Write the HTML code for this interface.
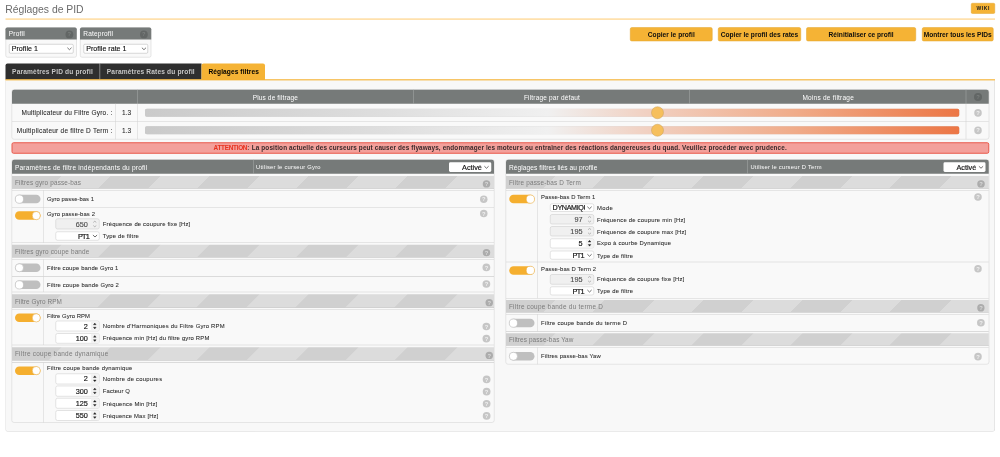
<!DOCTYPE html>
<html lang="fr"><head><meta charset="utf-8"><title>Réglages de PID</title>
<style>
html,body{margin:0;padding:0;}
body{width:1000px;height:457px;background:#fff;position:relative;overflow:hidden;font-family:"Liberation Sans", sans-serif;-webkit-font-smoothing:antialiased;}
#s{position:absolute;left:0;top:0;width:4000px;height:1828px;transform:scale(0.25);transform-origin:0 0;}
#g,#x{position:absolute;left:0;top:0;width:100%;height:100%;}
#x{will-change:opacity;}
#g>div,#x>div{position:absolute;box-sizing:border-box;}
.t,.u{white-space:nowrap;}
#g>svg{position:absolute;overflow:visible;}
</style></head>
<body>
<div id="s">
<div id="g">
<div style="left:22px;top:72.8px;width:3958px;height:6.8px;background:#ffe1ad;"></div>
<div style="left:3884px;top:12px;width:96px;height:43.2px;background:#f5b335;border-radius:6px;border:2px solid #e3a42c;"></div>
<div style="left:22px;top:109.2px;width:284.8px;height:121.2px;background:#f9f9f9;border:2.4px solid #cfcfcf;border-radius:8px;"></div>
<div style="left:22px;top:110.4px;width:284.8px;height:48px;background:#767a79;border-radius:7.2px 7.2px 0 0;"></div>
<div style="left:261.6px;top:122px;width:31.2px;height:31.2px;background:#626665;border-radius:50%;"></div>
<div style="left:36.4px;top:175.6px;width:257.6px;height:38px;background:#fff;border:2px solid #b0b0b0;border-radius:5.6px;"></div>
<svg style="left:269.16px;top:190.16px;width:17.68px;height:10.88px" viewBox="0 0 5.2 3.2"><path d="M0.5 0.6 L2.6 2.6 L4.7 0.6" fill="none" stroke="#333" stroke-width="0.8" stroke-linecap="round" stroke-linejoin="round"/></svg>
<div style="left:320px;top:109.2px;width:284.8px;height:121.2px;background:#f9f9f9;border:2.4px solid #cfcfcf;border-radius:8px;"></div>
<div style="left:320px;top:110.4px;width:284.8px;height:48px;background:#767a79;border-radius:7.2px 7.2px 0 0;"></div>
<div style="left:559.6px;top:122px;width:31.2px;height:31.2px;background:#626665;border-radius:50%;"></div>
<div style="left:334.4px;top:175.6px;width:257.6px;height:38px;background:#fff;border:2px solid #b0b0b0;border-radius:5.6px;"></div>
<svg style="left:567.16px;top:190.16px;width:17.68px;height:10.88px" viewBox="0 0 5.2 3.2"><path d="M0.5 0.6 L2.6 2.6 L4.7 0.6" fill="none" stroke="#333" stroke-width="0.8" stroke-linecap="round" stroke-linejoin="round"/></svg>
<div style="left:2520px;top:108.8px;width:330.4px;height:56px;background:#f5b335;border:2px solid #e3a42c;border-radius:7.2px;"></div>
<div style="left:2872px;top:108.8px;width:332px;height:56px;background:#f5b335;border:2px solid #e3a42c;border-radius:7.2px;"></div>
<div style="left:3224.8px;top:108.8px;width:439.2px;height:56px;background:#f5b335;border:2px solid #e3a42c;border-radius:7.2px;"></div>
<div style="left:3688px;top:108.8px;width:285.6px;height:56px;background:#f5b335;border:2px solid #e3a42c;border-radius:7.2px;"></div>
<div style="left:22px;top:253.6px;width:376.8px;height:64px;background:#2f2f2f;border-radius:8px 0 0 0;"></div>
<div style="left:400.4px;top:253.6px;width:405.2px;height:64px;background:#2f2f2f;"></div>
<div style="left:398.8px;top:253.6px;width:2px;height:64px;background:#8a8a8a;"></div>
<div style="left:805.6px;top:253.6px;width:254.4px;height:66.4px;background:#f5b335;border-radius:8px 8px 0 0;"></div>
<div style="left:22px;top:316.8px;width:3958px;height:6.4px;background:#f5b335;"></div>
<div style="left:20.8px;top:322.4px;width:3959.2px;height:1404.4px;background:#f8f8f8;border:2.4px solid #d2d2d2;border-top:none;border-radius:0 0 12px 12px;"></div>
<div style="left:46.4px;top:357.2px;width:3910.4px;height:201.2px;background:#f9f9f9;border:2.2px solid #d0d0d0;border-radius:10.4px;"></div>
<div style="left:48.4px;top:359.2px;width:3906.4px;height:56px;background:#767a79;border-radius:8.8px 8.8px 0 0;"></div>
<div style="left:549px;top:359.2px;width:2px;height:56px;background:#a9adac;"></div>
<div style="left:1653.8px;top:359.2px;width:2px;height:56px;background:#a9adac;"></div>
<div style="left:2757px;top:359.2px;width:2px;height:56px;background:#a9adac;"></div>
<div style="left:3863px;top:359.2px;width:2px;height:56px;background:#a9adac;"></div>
<div style="left:460.2px;top:415.2px;width:2px;height:141.6px;background:#d0d0d0;"></div>
<div style="left:549px;top:415.2px;width:2px;height:141.6px;background:#d0d0d0;"></div>
<div style="left:3863px;top:415.2px;width:2px;height:141.6px;background:#d0d0d0;"></div>
<div style="left:48.4px;top:484.8px;width:3906.4px;height:2px;background:#d0d0d0;"></div>
<div style="left:3896.4px;top:372.4px;width:31.2px;height:31.2px;background:#626665;border-radius:50%;"></div>
<div style="left:580px;top:435.2px;width:3256.8px;height:31.6px;background:linear-gradient(90deg,#cacaca 0%,#dedede 29%,#f0f0f0 49.5%,#f1d2c4 61%,#f0ab89 80%,#ec7645 100%);border-radius:7.2px;box-shadow:inset 0 0 2.4px rgba(0,0,0,.18);"></div>
<div style="left:2605.2px;top:426px;width:49.6px;height:49.6px;background:#f6bf5c;border:2.8px solid #c9a05a;border-radius:50%;"></div>
<div style="left:3896.8px;top:436.4px;width:30.4px;height:30.4px;background:#c6c6c6;border-radius:50%;"></div>
<div style="left:580px;top:505.2px;width:3256.8px;height:31.6px;background:linear-gradient(90deg,#cacaca 0%,#dedede 29%,#f0f0f0 49.5%,#f1d2c4 61%,#f0ab89 80%,#ec7645 100%);border-radius:7.2px;box-shadow:inset 0 0 2.4px rgba(0,0,0,.18);"></div>
<div style="left:2605.2px;top:496px;width:49.6px;height:49.6px;background:#f6bf5c;border:2.8px solid #c9a05a;border-radius:50%;"></div>
<div style="left:3896.8px;top:506.4px;width:30.4px;height:30.4px;background:#c6c6c6;border-radius:50%;"></div>
<div style="left:46.4px;top:568.8px;width:3910.4px;height:46.4px;background:#f3a09b;border:4px solid #e9594b;border-radius:8px;"></div>
<div style="left:46.4px;top:637.2px;width:1932px;height:1053.6px;background:#f9f9f9;border:2.2px solid #d0d0d0;border-radius:10.4px;"></div>
<div style="left:48.4px;top:639.2px;width:1928px;height:55.6px;background:#767a79;border-radius:8.8px 8.8px 0 0;"></div>
<div style="left:1011.8px;top:639.2px;width:2px;height:55.6px;background:#a9adac;"></div>
<div style="left:1796px;top:649.2px;width:168.8px;height:38.8px;background:#fff;border-radius:5.6px;"></div>
<svg style="left:1936.96px;top:664.04px;width:18.08px;height:11.12px" viewBox="0 0 5.2 3.2"><path d="M0.5 0.6 L2.6 2.6 L4.7 0.6" fill="none" stroke="#2a2a2a" stroke-width="0.8" stroke-linecap="round" stroke-linejoin="round"/></svg>
<div style="left:48.4px;top:704.4px;width:1928px;height:50.4px;background-color:#dcdcdc;background-image:linear-gradient(135deg,rgba(0,0,0,.055) 25%,transparent 25%,transparent 50%,rgba(0,0,0,.055) 50%,rgba(0,0,0,.055) 75%,transparent 75%,transparent);background-size:396px 396px;border-bottom:2px solid #c6c6c6;"></div>
<div style="left:1931.2px;top:720.8px;width:29.6px;height:29.6px;background:#acacac;border-radius:50%;"></div>
<div style="left:48.4px;top:759.68px;width:1928px;height:2.24px;background:#d0d0d0;"></div>
<div style="left:60.4px;top:779.2px;width:101.6px;height:34px;background:#bfbfbf;border-radius:17px;"></div>
<div style="left:60px;top:778.8px;width:34.8px;height:34.8px;background:#fff;border-radius:50%;border:2px solid #b0b0b0;"></div>
<div style="left:1920px;top:781.6px;width:30.4px;height:30.4px;background:#c6c6c6;border-radius:50%;"></div>
<div style="left:48.4px;top:828.08px;width:1928px;height:2.24px;background:#d0d0d0;"></div>
<div style="left:60.4px;top:845.2px;width:101.6px;height:34px;background:#f5af2f;border-radius:17px;"></div>
<div style="left:127.6px;top:844.8px;width:34.8px;height:34.8px;background:#fff;border-radius:50%;border:2px solid #e5a535;"></div>
<div style="left:1920px;top:838.8px;width:30.4px;height:30.4px;background:#c6c6c6;border-radius:50%;"></div>
<div style="left:221.6px;top:874.4px;width:176.4px;height:42.8px;background:#f0f0f0;border:2.2px solid #c8c8c8;border-radius:8px;"></div>
<svg style="left:372.4px;top:879.8px;width:14.4px;height:32px" viewBox="0 0 3.6 8"><path d="M0.6 2.2 L1.8 1.2 L3.0 2.2 M0.6 5.8 L1.8 6.8 L3.0 5.8" fill="none" stroke="#9a9a9a" stroke-width="0.7" stroke-linejoin="round" stroke-linecap="round"/></svg>
<div style="left:221.6px;top:925.6px;width:176.4px;height:36.4px;background:#fff;border:2.2px solid #c8c8c8;border-radius:8px;"></div>
<svg style="left:370.56px;top:939.44px;width:18.08px;height:11.12px" viewBox="0 0 5.2 3.2"><path d="M0.5 0.6 L2.6 2.6 L4.7 0.6" fill="none" stroke="#2a2a2a" stroke-width="0.8" stroke-linecap="round" stroke-linejoin="round"/></svg>
<div style="left:172.88px;top:760.8px;width:2.24px;height:210.4px;background:#d0d0d0;"></div>
<div style="left:48.4px;top:970.08px;width:1928px;height:2.24px;background:#d0d0d0;"></div>
<div style="left:48.4px;top:979.2px;width:1928px;height:50.4px;background-color:#dcdcdc;background-image:linear-gradient(135deg,rgba(0,0,0,.055) 25%,transparent 25%,transparent 50%,rgba(0,0,0,.055) 50%,rgba(0,0,0,.055) 75%,transparent 75%,transparent);background-size:396px 396px;border-bottom:2px solid #c6c6c6;"></div>
<div style="left:1931.2px;top:995.6px;width:29.6px;height:29.6px;background:#acacac;border-radius:50%;"></div>
<div style="left:48.4px;top:1036.08px;width:1928px;height:2.24px;background:#d0d0d0;"></div>
<div style="left:60.4px;top:1054px;width:101.6px;height:34px;background:#bfbfbf;border-radius:17px;"></div>
<div style="left:60px;top:1053.6px;width:34.8px;height:34.8px;background:#fff;border-radius:50%;border:2px solid #b0b0b0;"></div>
<div style="left:1930.4px;top:1054.4px;width:30.4px;height:30.4px;background:#c6c6c6;border-radius:50%;"></div>
<div style="left:48.4px;top:1104.48px;width:1928px;height:2.24px;background:#d0d0d0;"></div>
<div style="left:60.4px;top:1122.4px;width:101.6px;height:34px;background:#bfbfbf;border-radius:17px;"></div>
<div style="left:60px;top:1122px;width:34.8px;height:34.8px;background:#fff;border-radius:50%;border:2px solid #b0b0b0;"></div>
<div style="left:1930.4px;top:1120.8px;width:30.4px;height:30.4px;background:#c6c6c6;border-radius:50%;"></div>
<div style="left:172.88px;top:1037.2px;width:2.24px;height:130.8px;background:#d0d0d0;"></div>
<div style="left:48.4px;top:1166.88px;width:1928px;height:2.24px;background:#d0d0d0;"></div>
<div style="left:48.4px;top:1177.2px;width:1928px;height:54.4px;background-color:#dcdcdc;background-image:linear-gradient(135deg,rgba(0,0,0,.055) 25%,transparent 25%,transparent 50%,rgba(0,0,0,.055) 50%,rgba(0,0,0,.055) 75%,transparent 75%,transparent);background-size:396px 396px;border-bottom:2px solid #c6c6c6;"></div>
<div style="left:1942.4px;top:1195.6px;width:29.6px;height:29.6px;background:#acacac;border-radius:50%;"></div>
<div style="left:48.4px;top:1236.88px;width:1928px;height:2.24px;background:#d0d0d0;"></div>
<div style="left:60.4px;top:1254.4px;width:101.6px;height:34px;background:#f5af2f;border-radius:17px;"></div>
<div style="left:127.6px;top:1254px;width:34.8px;height:34.8px;background:#fff;border-radius:50%;border:2px solid #e5a535;"></div>
<div style="left:221.6px;top:1283.2px;width:176.4px;height:41.6px;background:#fff;border:2.2px solid #c8c8c8;border-radius:8px;"></div>
<div style="left:364.4px;top:1285.6px;width:31.2px;height:36.8px;background:#f3f3f3;border-radius:0 6px 6px 0;"></div>
<svg style="left:372.4px;top:1288px;width:14.4px;height:32px" viewBox="0 0 3.6 8"><path d="M0.45 2.75 L1.8 1.1 L3.15 2.75 Z M0.45 5.25 L1.8 6.9 L3.15 5.25 Z" fill="#1e1e1e" stroke="#1e1e1e" stroke-width="0.35" stroke-linejoin="round"/></svg>
<div style="left:1930.4px;top:1290.8px;width:30.4px;height:30.4px;background:#c6c6c6;border-radius:50%;"></div>
<div style="left:221.6px;top:1332.8px;width:176.4px;height:41.6px;background:#fff;border:2.2px solid #c8c8c8;border-radius:8px;"></div>
<div style="left:364.4px;top:1335.2px;width:31.2px;height:36.8px;background:#f3f3f3;border-radius:0 6px 6px 0;"></div>
<svg style="left:372.4px;top:1337.6px;width:14.4px;height:32px" viewBox="0 0 3.6 8"><path d="M0.45 2.75 L1.8 1.1 L3.15 2.75 Z M0.45 5.25 L1.8 6.9 L3.15 5.25 Z" fill="#1e1e1e" stroke="#1e1e1e" stroke-width="0.35" stroke-linejoin="round"/></svg>
<div style="left:1930.4px;top:1339.2px;width:30.4px;height:30.4px;background:#c6c6c6;border-radius:50%;"></div>
<div style="left:172.88px;top:1238px;width:2.24px;height:142px;background:#d0d0d0;"></div>
<div style="left:48.4px;top:1378.88px;width:1928px;height:2.24px;background:#d0d0d0;"></div>
<div style="left:48.4px;top:1388.8px;width:1928px;height:53.6px;background-color:#dcdcdc;background-image:linear-gradient(135deg,rgba(0,0,0,.055) 25%,transparent 25%,transparent 50%,rgba(0,0,0,.055) 50%,rgba(0,0,0,.055) 75%,transparent 75%,transparent);background-size:396px 396px;border-bottom:2px solid #c6c6c6;"></div>
<div style="left:1942.4px;top:1406.8px;width:29.6px;height:29.6px;background:#acacac;border-radius:50%;"></div>
<div style="left:48.4px;top:1448.48px;width:1928px;height:2.24px;background:#d0d0d0;"></div>
<div style="left:60.4px;top:1465.6px;width:101.6px;height:34px;background:#f5af2f;border-radius:17px;"></div>
<div style="left:127.6px;top:1465.2px;width:34.8px;height:34.8px;background:#fff;border-radius:50%;border:2px solid #e5a535;"></div>
<div style="left:221.6px;top:1494px;width:176.4px;height:42.8px;background:#fff;border:2.2px solid #c8c8c8;border-radius:8px;"></div>
<div style="left:364.4px;top:1496.4px;width:31.2px;height:38px;background:#f3f3f3;border-radius:0 6px 6px 0;"></div>
<svg style="left:372.4px;top:1499.4px;width:14.4px;height:32px" viewBox="0 0 3.6 8"><path d="M0.45 2.75 L1.8 1.1 L3.15 2.75 Z M0.45 5.25 L1.8 6.9 L3.15 5.25 Z" fill="#1e1e1e" stroke="#1e1e1e" stroke-width="0.35" stroke-linejoin="round"/></svg>
<div style="left:1931.2px;top:1502.4px;width:30.4px;height:30.4px;background:#c6c6c6;border-radius:50%;"></div>
<div style="left:221.6px;top:1542.8px;width:176.4px;height:42.8px;background:#fff;border:2.2px solid #c8c8c8;border-radius:8px;"></div>
<div style="left:364.4px;top:1545.2px;width:31.2px;height:38px;background:#f3f3f3;border-radius:0 6px 6px 0;"></div>
<svg style="left:372.4px;top:1548.2px;width:14.4px;height:32px" viewBox="0 0 3.6 8"><path d="M0.45 2.75 L1.8 1.1 L3.15 2.75 Z M0.45 5.25 L1.8 6.9 L3.15 5.25 Z" fill="#1e1e1e" stroke="#1e1e1e" stroke-width="0.35" stroke-linejoin="round"/></svg>
<div style="left:1931.2px;top:1551.2px;width:30.4px;height:30.4px;background:#c6c6c6;border-radius:50%;"></div>
<div style="left:221.6px;top:1592px;width:176.4px;height:42.4px;background:#fff;border:2.2px solid #c8c8c8;border-radius:8px;"></div>
<div style="left:364.4px;top:1594.4px;width:31.2px;height:37.6px;background:#f3f3f3;border-radius:0 6px 6px 0;"></div>
<svg style="left:372.4px;top:1597.2px;width:14.4px;height:32px" viewBox="0 0 3.6 8"><path d="M0.45 2.75 L1.8 1.1 L3.15 2.75 Z M0.45 5.25 L1.8 6.9 L3.15 5.25 Z" fill="#1e1e1e" stroke="#1e1e1e" stroke-width="0.35" stroke-linejoin="round"/></svg>
<div style="left:1931.2px;top:1599.6px;width:30.4px;height:30.4px;background:#c6c6c6;border-radius:50%;"></div>
<div style="left:221.6px;top:1640.8px;width:176.4px;height:42px;background:#fff;border:2.2px solid #c8c8c8;border-radius:8px;"></div>
<div style="left:364.4px;top:1643.2px;width:31.2px;height:37.2px;background:#f3f3f3;border-radius:0 6px 6px 0;"></div>
<svg style="left:372.4px;top:1645.8px;width:14.4px;height:32px" viewBox="0 0 3.6 8"><path d="M0.45 2.75 L1.8 1.1 L3.15 2.75 Z M0.45 5.25 L1.8 6.9 L3.15 5.25 Z" fill="#1e1e1e" stroke="#1e1e1e" stroke-width="0.35" stroke-linejoin="round"/></svg>
<div style="left:1931.2px;top:1648.4px;width:30.4px;height:30.4px;background:#c6c6c6;border-radius:50%;"></div>
<div style="left:172.88px;top:1449.6px;width:2.24px;height:240px;background:#d0d0d0;"></div>
<div style="left:2022.4px;top:637.2px;width:1934.4px;height:820.8px;background:#f9f9f9;border:2.2px solid #d0d0d0;border-radius:10.4px;"></div>
<div style="left:2024.4px;top:639.2px;width:1930.4px;height:55.6px;background:#767a79;border-radius:8.8px 8.8px 0 0;"></div>
<div style="left:2989px;top:639.2px;width:2px;height:55.6px;background:#a9adac;"></div>
<div style="left:3773.6px;top:649.2px;width:168.8px;height:38.8px;background:#fff;border-radius:5.6px;"></div>
<svg style="left:3914.56px;top:664.04px;width:18.08px;height:11.12px" viewBox="0 0 5.2 3.2"><path d="M0.5 0.6 L2.6 2.6 L4.7 0.6" fill="none" stroke="#2a2a2a" stroke-width="0.8" stroke-linecap="round" stroke-linejoin="round"/></svg>
<div style="left:2024.4px;top:704.4px;width:1930.4px;height:50.4px;background-color:#dcdcdc;background-image:linear-gradient(135deg,rgba(0,0,0,.055) 25%,transparent 25%,transparent 50%,rgba(0,0,0,.055) 50%,rgba(0,0,0,.055) 75%,transparent 75%,transparent);background-size:396px 396px;border-bottom:2px solid #c6c6c6;"></div>
<div style="left:3909.2px;top:720.8px;width:29.6px;height:29.6px;background:#acacac;border-radius:50%;"></div>
<div style="left:2024.4px;top:759.68px;width:1930.4px;height:2.24px;background:#d0d0d0;"></div>
<div style="left:2036.8px;top:779.2px;width:101.6px;height:34px;background:#f5af2f;border-radius:17px;"></div>
<div style="left:2104px;top:778.8px;width:34.8px;height:34.8px;background:#fff;border-radius:50%;border:2px solid #e5a535;"></div>
<div style="left:3896.8px;top:772.8px;width:30.4px;height:30.4px;background:#c6c6c6;border-radius:50%;"></div>
<div style="left:2200px;top:813.6px;width:176.4px;height:33.6px;background:#fff;border:2.2px solid #c8c8c8;border-radius:8px;"></div>
<svg style="left:2348.96px;top:826.04px;width:18.08px;height:11.12px" viewBox="0 0 5.2 3.2"><path d="M0.5 0.6 L2.6 2.6 L4.7 0.6" fill="none" stroke="#2a2a2a" stroke-width="0.8" stroke-linecap="round" stroke-linejoin="round"/></svg>
<div style="left:2200px;top:857.2px;width:176.4px;height:39.6px;background:#f0f0f0;border:2.2px solid #c8c8c8;border-radius:8px;"></div>
<svg style="left:2350.8px;top:861px;width:14.4px;height:32px" viewBox="0 0 3.6 8"><path d="M0.6 2.2 L1.8 1.2 L3.0 2.2 M0.6 5.8 L1.8 6.8 L3.0 5.8" fill="none" stroke="#9a9a9a" stroke-width="0.7" stroke-linejoin="round" stroke-linecap="round"/></svg>
<div style="left:2200px;top:904.8px;width:176.4px;height:40.4px;background:#f0f0f0;border:2.2px solid #c8c8c8;border-radius:8px;"></div>
<svg style="left:2350.8px;top:909px;width:14.4px;height:32px" viewBox="0 0 3.6 8"><path d="M0.6 2.2 L1.8 1.2 L3.0 2.2 M0.6 5.8 L1.8 6.8 L3.0 5.8" fill="none" stroke="#9a9a9a" stroke-width="0.7" stroke-linejoin="round" stroke-linecap="round"/></svg>
<div style="left:2200px;top:953.6px;width:176.4px;height:39.6px;background:#fff;border:2.2px solid #c8c8c8;border-radius:8px;"></div>
<div style="left:2342.8px;top:956px;width:31.2px;height:34.8px;background:#f3f3f3;border-radius:0 6px 6px 0;"></div>
<svg style="left:2350.8px;top:957.4px;width:14.4px;height:32px" viewBox="0 0 3.6 8"><path d="M0.45 2.75 L1.8 1.1 L3.15 2.75 Z M0.45 5.25 L1.8 6.9 L3.15 5.25 Z" fill="#1e1e1e" stroke="#1e1e1e" stroke-width="0.35" stroke-linejoin="round"/></svg>
<div style="left:2200px;top:1003.2px;width:176.4px;height:34.4px;background:#fff;border:2.2px solid #c8c8c8;border-radius:8px;"></div>
<svg style="left:2348.96px;top:1016.04px;width:18.08px;height:11.12px" viewBox="0 0 5.2 3.2"><path d="M0.5 0.6 L2.6 2.6 L4.7 0.6" fill="none" stroke="#2a2a2a" stroke-width="0.8" stroke-linecap="round" stroke-linejoin="round"/></svg>
<div style="left:2024.4px;top:1046.88px;width:1930.4px;height:2.24px;background:#d0d0d0;"></div>
<div style="left:2036.8px;top:1064.8px;width:101.6px;height:34px;background:#f5af2f;border-radius:17px;"></div>
<div style="left:2104px;top:1064.4px;width:34.8px;height:34.8px;background:#fff;border-radius:50%;border:2px solid #e5a535;"></div>
<div style="left:3896.8px;top:1059.6px;width:30.4px;height:30.4px;background:#c6c6c6;border-radius:50%;"></div>
<div style="left:2200px;top:1096.8px;width:176.4px;height:40.8px;background:#f0f0f0;border:2.2px solid #c8c8c8;border-radius:8px;"></div>
<svg style="left:2350.8px;top:1101.2px;width:14.4px;height:32px" viewBox="0 0 3.6 8"><path d="M0.6 2.2 L1.8 1.2 L3.0 2.2 M0.6 5.8 L1.8 6.8 L3.0 5.8" fill="none" stroke="#9a9a9a" stroke-width="0.7" stroke-linejoin="round" stroke-linecap="round"/></svg>
<div style="left:2200px;top:1146px;width:176.4px;height:35.2px;background:#fff;border:2.2px solid #c8c8c8;border-radius:8px;"></div>
<svg style="left:2348.96px;top:1159.24px;width:18.08px;height:11.12px" viewBox="0 0 5.2 3.2"><path d="M0.5 0.6 L2.6 2.6 L4.7 0.6" fill="none" stroke="#2a2a2a" stroke-width="0.8" stroke-linecap="round" stroke-linejoin="round"/></svg>
<div style="left:2150.08px;top:760.8px;width:2.24px;height:432px;background:#d0d0d0;"></div>
<div style="left:2024.4px;top:1191.68px;width:1930.4px;height:2.24px;background:#d0d0d0;"></div>
<div style="left:2024.4px;top:1200px;width:1930.4px;height:50px;background-color:#dcdcdc;background-image:linear-gradient(135deg,rgba(0,0,0,.055) 25%,transparent 25%,transparent 50%,rgba(0,0,0,.055) 50%,rgba(0,0,0,.055) 75%,transparent 75%,transparent);background-size:396px 396px;border-bottom:2px solid #c6c6c6;"></div>
<div style="left:3908.8px;top:1216.2px;width:29.6px;height:29.6px;background:#acacac;border-radius:50%;"></div>
<div style="left:2024.4px;top:1255.68px;width:1930.4px;height:2.24px;background:#d0d0d0;"></div>
<div style="left:2036.8px;top:1275.2px;width:101.6px;height:34px;background:#bfbfbf;border-radius:17px;"></div>
<div style="left:2036.4px;top:1274.8px;width:34.8px;height:34.8px;background:#fff;border-radius:50%;border:2px solid #b0b0b0;"></div>
<div style="left:3908.4px;top:1275.6px;width:30.4px;height:30.4px;background:#c6c6c6;border-radius:50%;"></div>
<div style="left:2150.08px;top:1256.8px;width:2.24px;height:68.8px;background:#d0d0d0;"></div>
<div style="left:2024.4px;top:1324.48px;width:1930.4px;height:2.24px;background:#d0d0d0;"></div>
<div style="left:2024.4px;top:1332.8px;width:1930.4px;height:50px;background-color:#dcdcdc;background-image:linear-gradient(135deg,rgba(0,0,0,.055) 25%,transparent 25%,transparent 50%,rgba(0,0,0,.055) 50%,rgba(0,0,0,.055) 75%,transparent 75%,transparent);background-size:396px 396px;border-bottom:2px solid #c6c6c6;"></div>
<div style="left:2024.4px;top:1388.88px;width:1930.4px;height:2.24px;background:#d0d0d0;"></div>
<div style="left:2036.8px;top:1408px;width:101.6px;height:34px;background:#bfbfbf;border-radius:17px;"></div>
<div style="left:2036.4px;top:1407.6px;width:34.8px;height:34.8px;background:#fff;border-radius:50%;border:2px solid #b0b0b0;"></div>
<div style="left:3896.8px;top:1411.2px;width:30.4px;height:30.4px;background:#c6c6c6;border-radius:50%;"></div>
<div style="left:2150.08px;top:1390px;width:2.24px;height:66.8px;background:#d0d0d0;"></div>
</div>
<div id="x">
<div class="t" style="top:12.28px;font-size:41.6px;line-height:49.92px;font-weight:400;color:#6a6a6a;letter-spacing:-0.09px;left:21.2px;">Réglages de PID</div>
<div class="t" style="top:20.76px;font-size:20px;line-height:24px;font-weight:700;color:#1a1a1a;letter-spacing:2.26px;left:3133.12px;width:1600px;text-align:center;">WIKI</div>
<div class="t" style="top:119.16px;font-size:26px;line-height:31.2px;font-weight:400;color:#f8f8f8;letter-spacing:0.87px;-webkit-text-stroke:0.16px #f8f8f8;left:35.2px;">Profil</div>
<div class="t" style="top:121.84px;font-size:23.2px;line-height:27.84px;font-weight:700;color:#7b7f7e;letter-spacing:0px;left:-522.8px;width:1600px;text-align:center;">?</div>
<div class="t" style="top:176.72px;font-size:28.4px;line-height:34.08px;font-weight:400;color:#0c0c0c;letter-spacing:0.08px;-webkit-text-stroke:0.48px #0c0c0c;left:46.8px;">Profile 1</div>
<div class="t" style="top:119.16px;font-size:26px;line-height:31.2px;font-weight:400;color:#f8f8f8;letter-spacing:0.79px;-webkit-text-stroke:0.16px #f8f8f8;left:333.2px;">Rateprofil</div>
<div class="t" style="top:121.84px;font-size:23.2px;line-height:27.84px;font-weight:700;color:#7b7f7e;letter-spacing:0px;left:-224.8px;width:1600px;text-align:center;">?</div>
<div class="t" style="top:176.72px;font-size:28.4px;line-height:34.08px;font-weight:400;color:#0c0c0c;letter-spacing:0.01px;-webkit-text-stroke:0.48px #0c0c0c;left:344.8px;">Profile rate 1</div>
<div class="t" style="top:122.92px;font-size:26.4px;line-height:31.68px;font-weight:700;color:#0e0e0e;letter-spacing:0.12px;left:1885.24px;width:1600px;text-align:center;">Copier le profil</div>
<div class="t" style="top:122.92px;font-size:26.4px;line-height:31.68px;font-weight:700;color:#0e0e0e;letter-spacing:0.01px;left:2238px;width:1600px;text-align:center;">Copier le profil des rates</div>
<div class="t" style="top:122.92px;font-size:26.4px;line-height:31.68px;font-weight:700;color:#0e0e0e;letter-spacing:0.02px;left:2644.4px;width:1600px;text-align:center;">Réinitialiser ce profil</div>
<div class="t" style="top:122.92px;font-size:26.4px;line-height:31.68px;font-weight:700;color:#0e0e0e;letter-spacing:0.04px;left:3030.8px;width:1600px;text-align:center;">Montrer tous les PIDs</div>
<div class="t" style="top:270.92px;font-size:26.4px;line-height:31.68px;font-weight:700;color:#c6c6c6;letter-spacing:0.63px;left:48.4px;">Paramètres PID du profil</div>
<div class="t" style="top:270.92px;font-size:26.4px;line-height:31.68px;font-weight:700;color:#c6c6c6;letter-spacing:0.63px;left:427.2px;">Paramètres Rates du profil</div>
<div class="t" style="top:270.92px;font-size:26.4px;line-height:31.68px;font-weight:700;color:#000;letter-spacing:0.31px;left:834px;">Réglages filtres</div>
<div class="t" style="top:375.16px;font-size:26px;line-height:31.2px;font-weight:400;color:#ffffff;letter-spacing:0.61px;left:301.52px;width:1600px;text-align:center;">Plus de filtrage</div>
<div class="t" style="top:375.16px;font-size:26px;line-height:31.2px;font-weight:400;color:#ffffff;letter-spacing:0.7px;left:1407.96px;width:1600px;text-align:center;">Filtrage par défaut</div>
<div class="t" style="top:375.16px;font-size:26px;line-height:31.2px;font-weight:400;color:#ffffff;letter-spacing:0.93px;left:2512.88px;width:1600px;text-align:center;">Moins de filtrage</div>
<div class="t" style="top:373.84px;font-size:23.2px;line-height:27.84px;font-weight:700;color:#7b7f7e;letter-spacing:0px;left:3112px;width:1600px;text-align:center;">?</div>
<div class="t" style="top:435.16px;font-size:26px;line-height:31.2px;font-weight:400;color:#262626;letter-spacing:0.74px;-webkit-text-stroke:0.28px #262626;right:3550.44px;">Multiplicateur du Filtre Gyro. :</div>
<div class="t" style="top:507.16px;font-size:26px;line-height:31.2px;font-weight:400;color:#262626;letter-spacing:0.96px;-webkit-text-stroke:0.28px #262626;right:3550.24px;">Multiplicateur de filtre D Term :</div>
<div class="t" style="top:435.16px;font-size:26px;line-height:31.2px;font-weight:400;color:#262626;letter-spacing:-0.08px;-webkit-text-stroke:0.28px #262626;left:-293.64px;width:1600px;text-align:center;">1.3</div>
<div class="t" style="top:507.16px;font-size:26px;line-height:31.2px;font-weight:400;color:#262626;letter-spacing:-0.08px;-webkit-text-stroke:0.28px #262626;left:-293.64px;width:1600px;text-align:center;">1.3</div>
<div class="t" style="top:437.84px;font-size:23.2px;line-height:27.84px;font-weight:700;color:#f0f0f0;letter-spacing:0px;left:3112px;width:1600px;text-align:center;">?</div>
<div class="t" style="top:505.84px;font-size:23.2px;line-height:27.84px;font-weight:700;color:#f0f0f0;letter-spacing:0px;left:3112px;width:1600px;text-align:center;">?</div>
<div class="t" style="top:575.4px;font-size:25.6px;line-height:30.72px;font-weight:700;color:#3b2a2a;letter-spacing:0.47px;left:854.4px;"><span style="color:#e8321f;letter-spacing:-1.12px">ATTENTION</span><span style="color:#6a4a48;letter-spacing:2px">:</span> La position actuelle des curseurs peut causer des flyaways, endommager les moteurs ou entraîner des réactions dangereuses du quad. Veuillez procéder avec prudence.</div>
<div class="t" style="top:654.92px;font-size:26.4px;line-height:31.68px;font-weight:400;color:#ffffff;letter-spacing:0.76px;left:59.6px;">Paramètres de filtre indépendants du profil</div>
<div class="t" style="top:653.84px;font-size:23.2px;line-height:27.84px;font-weight:400;color:#ffffff;letter-spacing:0.96px;left:1024.4px;">Utiliser le curseur Gyro</div>
<div class="t" style="top:652.24px;font-size:29.2px;line-height:35.04px;font-weight:400;color:#111;letter-spacing:0px;-webkit-text-stroke:0.64px #111;right:2072.4px;">Activé</div>
<div class="t" style="top:715.4px;font-size:25.6px;line-height:30.72px;font-weight:400;color:#7b7b7b;letter-spacing:0.59px;left:59.6px;">Filtres gyro passe-bas</div>
<div class="t" style="top:721.84px;font-size:23.2px;line-height:27.84px;font-weight:700;color:#dadada;letter-spacing:0px;left:1146px;width:1600px;text-align:center;">?</div>
<div class="t" style="top:781.6px;font-size:23.6px;line-height:28.32px;font-weight:400;color:#2b2b2b;letter-spacing:0.16px;-webkit-text-stroke:0.28px #2b2b2b;left:187.6px;">Gyro passe-bas 1</div>
<div class="t" style="top:781.84px;font-size:23.2px;line-height:27.84px;font-weight:700;color:#f0f0f0;letter-spacing:0px;left:1135.2px;width:1600px;text-align:center;">?</div>
<div class="t" style="top:841.6px;font-size:23.6px;line-height:28.32px;font-weight:400;color:#2b2b2b;letter-spacing:0.39px;-webkit-text-stroke:0.28px #2b2b2b;left:187.6px;">Gyro passe-bas 2</div>
<div class="t" style="top:841.84px;font-size:23.2px;line-height:27.84px;font-weight:700;color:#f0f0f0;letter-spacing:0px;left:1135.2px;width:1600px;text-align:center;">?</div>
<div class="t" style="top:880.24px;font-size:29.2px;line-height:35.04px;font-weight:400;color:#4a4a4a;letter-spacing:0px;-webkit-text-stroke:0.48px #4a4a4a;right:3648.4px;">650</div>
<div class="t" style="top:881.6px;font-size:23.6px;line-height:28.32px;font-weight:400;color:#2b2b2b;letter-spacing:0.7px;-webkit-text-stroke:0.28px #2b2b2b;left:411.2px;">Fréquence de coupure fixe [Hz]</div>
<div class="t" style="top:928.24px;font-size:29.2px;line-height:35.04px;font-weight:400;color:#111;letter-spacing:-2.96px;-webkit-text-stroke:0.72px #111;right:3643.36px;">PT1</div>
<div class="t" style="top:929.6px;font-size:23.6px;line-height:28.32px;font-weight:400;color:#2b2b2b;letter-spacing:0.69px;-webkit-text-stroke:0.28px #2b2b2b;left:411.2px;">Type de filtre</div>
<div class="t" style="top:991.4px;font-size:25.6px;line-height:30.72px;font-weight:400;color:#7b7b7b;letter-spacing:0.71px;left:59.6px;">Filtres gyro coupe bande</div>
<div class="t" style="top:997.84px;font-size:23.2px;line-height:27.84px;font-weight:700;color:#dadada;letter-spacing:0px;left:1146px;width:1600px;text-align:center;">?</div>
<div class="t" style="top:1057.6px;font-size:23.6px;line-height:28.32px;font-weight:400;color:#2b2b2b;letter-spacing:0.55px;-webkit-text-stroke:0.28px #2b2b2b;left:187.6px;">Filtre coupe bande Gyro 1</div>
<div class="t" style="top:1057.84px;font-size:23.2px;line-height:27.84px;font-weight:700;color:#f0f0f0;letter-spacing:0px;left:1145.6px;width:1600px;text-align:center;">?</div>
<div class="t" style="top:1125.6px;font-size:23.6px;line-height:28.32px;font-weight:400;color:#2b2b2b;letter-spacing:0.63px;-webkit-text-stroke:0.28px #2b2b2b;left:187.6px;">Filtre coupe bande Gyro 2</div>
<div class="t" style="top:1121.84px;font-size:23.2px;line-height:27.84px;font-weight:700;color:#f0f0f0;letter-spacing:0px;left:1145.6px;width:1600px;text-align:center;">?</div>
<div class="t" style="top:1191.4px;font-size:25.6px;line-height:30.72px;font-weight:400;color:#7b7b7b;letter-spacing:0.33px;left:59.6px;">Filtre Gyro RPM</div>
<div class="t" style="top:1197.84px;font-size:23.2px;line-height:27.84px;font-weight:700;color:#dadada;letter-spacing:0px;left:1157.2px;width:1600px;text-align:center;">?</div>
<div class="t" style="top:1249.6px;font-size:23.6px;line-height:28.32px;font-weight:400;color:#2b2b2b;letter-spacing:0.24px;-webkit-text-stroke:0.28px #2b2b2b;left:187.6px;">Filtre Gyro RPM</div>
<div class="t" style="top:1288.24px;font-size:29.2px;line-height:35.04px;font-weight:400;color:#151515;letter-spacing:0px;-webkit-text-stroke:0.64px #151515;right:3648.4px;">2</div>
<div class="t" style="top:1289.6px;font-size:23.6px;line-height:28.32px;font-weight:400;color:#2b2b2b;letter-spacing:0.8px;-webkit-text-stroke:0.28px #2b2b2b;left:411.2px;">Nombre d'Harmoniques du Filtre Gyro RPM</div>
<div class="t" style="top:1293.84px;font-size:23.2px;line-height:27.84px;font-weight:700;color:#f0f0f0;letter-spacing:0px;left:1145.6px;width:1600px;text-align:center;">?</div>
<div class="t" style="top:1336.24px;font-size:29.2px;line-height:35.04px;font-weight:400;color:#151515;letter-spacing:0px;-webkit-text-stroke:0.64px #151515;right:3648.4px;">100</div>
<div class="t" style="top:1337.6px;font-size:23.6px;line-height:28.32px;font-weight:400;color:#2b2b2b;letter-spacing:0.69px;-webkit-text-stroke:0.28px #2b2b2b;left:411.2px;">Fréquence min [Hz] du filtre gyro RPM</div>
<div class="t" style="top:1341.84px;font-size:23.2px;line-height:27.84px;font-weight:700;color:#f0f0f0;letter-spacing:0px;left:1145.6px;width:1600px;text-align:center;">?</div>
<div class="t" style="top:1399.4px;font-size:25.6px;line-height:30.72px;font-weight:400;color:#7b7b7b;letter-spacing:1.07px;left:59.6px;">Filtre coupe bande dynamique</div>
<div class="t" style="top:1409.84px;font-size:23.2px;line-height:27.84px;font-weight:700;color:#dadada;letter-spacing:0px;left:1157.2px;width:1600px;text-align:center;">?</div>
<div class="t" style="top:1457.6px;font-size:23.6px;line-height:28.32px;font-weight:400;color:#2b2b2b;letter-spacing:0.9px;-webkit-text-stroke:0.28px #2b2b2b;left:187.6px;">Filtre coupe bande dynamique</div>
<div class="t" style="top:1496.24px;font-size:29.2px;line-height:35.04px;font-weight:400;color:#151515;letter-spacing:0px;-webkit-text-stroke:0.64px #151515;right:3648.4px;">2</div>
<div class="t" style="top:1501.6px;font-size:23.6px;line-height:28.32px;font-weight:400;color:#2b2b2b;letter-spacing:0.99px;-webkit-text-stroke:0.28px #2b2b2b;left:411.2px;">Nombre de coupures</div>
<div class="t" style="top:1505.84px;font-size:23.2px;line-height:27.84px;font-weight:700;color:#f0f0f0;letter-spacing:0px;left:1146.4px;width:1600px;text-align:center;">?</div>
<div class="t" style="top:1548.24px;font-size:29.2px;line-height:35.04px;font-weight:400;color:#151515;letter-spacing:0px;-webkit-text-stroke:0.64px #151515;right:3648.4px;">300</div>
<div class="t" style="top:1549.6px;font-size:23.6px;line-height:28.32px;font-weight:400;color:#2b2b2b;letter-spacing:0.39px;-webkit-text-stroke:0.28px #2b2b2b;left:411.2px;">Facteur Q</div>
<div class="t" style="top:1553.84px;font-size:23.2px;line-height:27.84px;font-weight:700;color:#f0f0f0;letter-spacing:0px;left:1146.4px;width:1600px;text-align:center;">?</div>
<div class="t" style="top:1596.24px;font-size:29.2px;line-height:35.04px;font-weight:400;color:#151515;letter-spacing:0px;-webkit-text-stroke:0.64px #151515;right:3648.4px;">125</div>
<div class="t" style="top:1601.6px;font-size:23.6px;line-height:28.32px;font-weight:400;color:#2b2b2b;letter-spacing:0.71px;-webkit-text-stroke:0.28px #2b2b2b;left:411.2px;">Fréquence Min [Hz]</div>
<div class="t" style="top:1601.84px;font-size:23.2px;line-height:27.84px;font-weight:700;color:#f0f0f0;letter-spacing:0px;left:1146.4px;width:1600px;text-align:center;">?</div>
<div class="t" style="top:1644.24px;font-size:29.2px;line-height:35.04px;font-weight:400;color:#151515;letter-spacing:0px;-webkit-text-stroke:0.64px #151515;right:3648.4px;">550</div>
<div class="t" style="top:1649.6px;font-size:23.6px;line-height:28.32px;font-weight:400;color:#2b2b2b;letter-spacing:0.57px;-webkit-text-stroke:0.28px #2b2b2b;left:411.2px;">Fréquence Max [Hz]</div>
<div class="t" style="top:1649.84px;font-size:23.2px;line-height:27.84px;font-weight:700;color:#f0f0f0;letter-spacing:0px;left:1146.4px;width:1600px;text-align:center;">?</div>
<div class="t" style="top:654.92px;font-size:26.4px;line-height:31.68px;font-weight:400;color:#ffffff;letter-spacing:0.29px;left:2035.6px;">Réglages filtres liés au profile</div>
<div class="t" style="top:653.84px;font-size:23.2px;line-height:27.84px;font-weight:400;color:#ffffff;letter-spacing:0.99px;left:3001.6px;">Utiliser le curseur D Term</div>
<div class="t" style="top:652.24px;font-size:29.2px;line-height:35.04px;font-weight:400;color:#111;letter-spacing:0px;-webkit-text-stroke:0.64px #111;right:94.8px;">Activé</div>
<div class="t" style="top:715.4px;font-size:25.6px;line-height:30.72px;font-weight:400;color:#7b7b7b;letter-spacing:0.73px;left:2035.6px;">Filtre passe-bas D Term</div>
<div class="t" style="top:721.84px;font-size:23.2px;line-height:27.84px;font-weight:700;color:#dadada;letter-spacing:0px;left:3124px;width:1600px;text-align:center;">?</div>
<div class="t" style="top:773.6px;font-size:23.6px;line-height:28.32px;font-weight:400;color:#2b2b2b;letter-spacing:0.21px;-webkit-text-stroke:0.28px #2b2b2b;left:2164.4px;">Passe-bas D Term 1</div>
<div class="t" style="top:773.84px;font-size:23.2px;line-height:27.84px;font-weight:700;color:#f0f0f0;letter-spacing:0px;left:3112px;width:1600px;text-align:center;">?</div>
<div style="left:2210.4px;top:813.6px;width:129.6px;height:33.6px;overflow:hidden;"><div class="u" style="position:absolute;left:0;top:-1px;font-size:28.8px;line-height:34.4px;letter-spacing:-1.52px;color:#111;-webkit-text-stroke:0.72px #111;">DYNAMIQUE</div></div>
<div class="t" style="top:817.6px;font-size:23.6px;line-height:28.32px;font-weight:400;color:#2b2b2b;letter-spacing:1.66px;-webkit-text-stroke:0.28px #2b2b2b;left:2387.6px;">Mode</div>
<div class="t" style="top:860.24px;font-size:29.2px;line-height:35.04px;font-weight:400;color:#4a4a4a;letter-spacing:0px;-webkit-text-stroke:0.48px #4a4a4a;right:1670px;">97</div>
<div class="t" style="top:865.6px;font-size:23.6px;line-height:28.32px;font-weight:400;color:#2b2b2b;letter-spacing:0.82px;-webkit-text-stroke:0.28px #2b2b2b;left:2387.6px;">Fréquence de coupure min [Hz]</div>
<div class="t" style="top:908.24px;font-size:29.2px;line-height:35.04px;font-weight:400;color:#4a4a4a;letter-spacing:0px;-webkit-text-stroke:0.48px #4a4a4a;right:1670px;">195</div>
<div class="t" style="top:913.6px;font-size:23.6px;line-height:28.32px;font-weight:400;color:#2b2b2b;letter-spacing:0.72px;-webkit-text-stroke:0.28px #2b2b2b;left:2387.6px;">Fréquence de coupure max [Hz]</div>
<div class="t" style="top:956.24px;font-size:29.2px;line-height:35.04px;font-weight:400;color:#151515;letter-spacing:0px;-webkit-text-stroke:0.64px #151515;right:1670px;">5</div>
<div class="t" style="top:957.6px;font-size:23.6px;line-height:28.32px;font-weight:400;color:#2b2b2b;letter-spacing:0.85px;-webkit-text-stroke:0.28px #2b2b2b;left:2387.6px;">Expo à courbe Dynamique</div>
<div class="t" style="top:1004.24px;font-size:29.2px;line-height:35.04px;font-weight:400;color:#111;letter-spacing:-2.96px;-webkit-text-stroke:0.72px #111;right:1664.96px;">PT1</div>
<div class="t" style="top:1009.6px;font-size:23.6px;line-height:28.32px;font-weight:400;color:#2b2b2b;letter-spacing:0.69px;-webkit-text-stroke:0.28px #2b2b2b;left:2387.6px;">Type de filtre</div>
<div class="t" style="top:1061.6px;font-size:23.6px;line-height:28.32px;font-weight:400;color:#2b2b2b;letter-spacing:0.39px;-webkit-text-stroke:0.28px #2b2b2b;left:2164.4px;">Passe-bas D Term 2</div>
<div class="t" style="top:1061.84px;font-size:23.2px;line-height:27.84px;font-weight:700;color:#f0f0f0;letter-spacing:0px;left:3112px;width:1600px;text-align:center;">?</div>
<div class="t" style="top:1100.24px;font-size:29.2px;line-height:35.04px;font-weight:400;color:#4a4a4a;letter-spacing:0px;-webkit-text-stroke:0.48px #4a4a4a;right:1670px;">195</div>
<div class="t" style="top:1101.6px;font-size:23.6px;line-height:28.32px;font-weight:400;color:#2b2b2b;letter-spacing:0.7px;-webkit-text-stroke:0.28px #2b2b2b;left:2387.6px;">Fréquence de coupure fixe [Hz]</div>
<div class="t" style="top:1148.24px;font-size:29.2px;line-height:35.04px;font-weight:400;color:#111;letter-spacing:-2.96px;-webkit-text-stroke:0.72px #111;right:1664.96px;">PT1</div>
<div class="t" style="top:1149.6px;font-size:23.6px;line-height:28.32px;font-weight:400;color:#2b2b2b;letter-spacing:0.69px;-webkit-text-stroke:0.28px #2b2b2b;left:2387.6px;">Type de filtre</div>
<div class="t" style="top:1211.4px;font-size:25.6px;line-height:30.72px;font-weight:400;color:#7b7b7b;letter-spacing:1.08px;left:2035.6px;">Filtre coupe bande du terme D</div>
<div class="t" style="top:1217.84px;font-size:23.2px;line-height:27.84px;font-weight:700;color:#dadada;letter-spacing:0px;left:3123.6px;width:1600px;text-align:center;">?</div>
<div class="t" style="top:1277.6px;font-size:23.6px;line-height:28.32px;font-weight:400;color:#2b2b2b;letter-spacing:0.9px;-webkit-text-stroke:0.28px #2b2b2b;left:2164.4px;">Filtre coupe bande du terme D</div>
<div class="t" style="top:1277.84px;font-size:23.2px;line-height:27.84px;font-weight:700;color:#f0f0f0;letter-spacing:0px;left:3123.6px;width:1600px;text-align:center;">?</div>
<div class="t" style="top:1343.4px;font-size:25.6px;line-height:30.72px;font-weight:400;color:#7b7b7b;letter-spacing:0.43px;left:2035.6px;">Filtres passe-bas Yaw</div>
<div class="t" style="top:1409.6px;font-size:23.6px;line-height:28.32px;font-weight:400;color:#2b2b2b;letter-spacing:0.42px;-webkit-text-stroke:0.28px #2b2b2b;left:2164.4px;">Filtres passe-bas Yaw</div>
<div class="t" style="top:1413.84px;font-size:23.2px;line-height:27.84px;font-weight:700;color:#f0f0f0;letter-spacing:0px;left:3112px;width:1600px;text-align:center;">?</div>
</div>
</div>
</body></html>
